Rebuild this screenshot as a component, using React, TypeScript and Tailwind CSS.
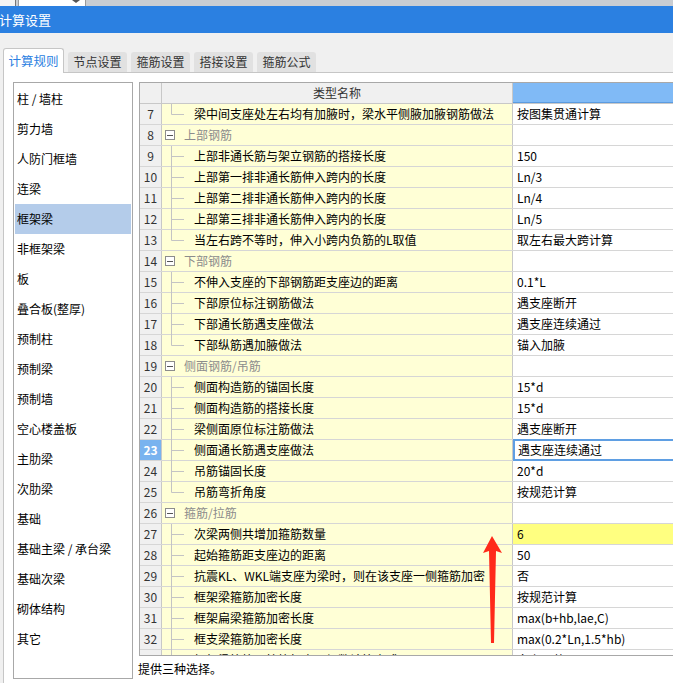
import React from "react";

type Row = { n: number; name: string; value?: string; group?: boolean; last?: boolean };

const rows: Row[] = [
  { n: 7, name: "梁中间支座处左右均有加腋时，梁水平侧腋加腋钢筋做法", value: "按图集贯通计算", last: true },
  { n: 8, name: "上部钢筋", group: true },
  { n: 9, name: "上部非通长筋与架立钢筋的搭接长度", value: "150" },
  { n: 10, name: "上部第一排非通长筋伸入跨内的长度", value: "Ln/3" },
  { n: 11, name: "上部第二排非通长筋伸入跨内的长度", value: "Ln/4" },
  { n: 12, name: "上部第三排非通长筋伸入跨内的长度", value: "Ln/5" },
  { n: 13, name: "当左右跨不等时，伸入小跨内负筋的L取值", value: "取左右最大跨计算", last: true },
  { n: 14, name: "下部钢筋", group: true },
  { n: 15, name: "不伸入支座的下部钢筋距支座边的距离", value: "0.1*L" },
  { n: 16, name: "下部原位标注钢筋做法", value: "遇支座断开" },
  { n: 17, name: "下部通长筋遇支座做法", value: "遇支座连续通过" },
  { n: 18, name: "下部纵筋遇加腋做法", value: "锚入加腋", last: true },
  { n: 19, name: "侧面钢筋/吊筋", group: true },
  { n: 20, name: "侧面构造筋的锚固长度", value: "15*d" },
  { n: 21, name: "侧面构造筋的搭接长度", value: "15*d" },
  { n: 22, name: "梁侧面原位标注筋做法", value: "遇支座断开" },
  { n: 23, name: "侧面通长筋遇支座做法", value: "遇支座连续通过" },
  { n: 24, name: "吊筋锚固长度", value: "20*d" },
  { n: 25, name: "吊筋弯折角度", value: "按规范计算", last: true },
  { n: 26, name: "箍筋/拉筋", group: true },
  { n: 27, name: "次梁两侧共增加箍筋数量", value: "6" },
  { n: 28, name: "起始箍筋距支座边的距离", value: "50" },
  { n: 29, name: "抗震KL、WKL端支座为梁时，则在该支座一侧箍筋加密", value: "否" },
  { n: 30, name: "框架梁箍筋加密长度", value: "按规范计算" },
  { n: 31, name: "框架扁梁箍筋加密长度", value: "max(b+hb,lae,C)" },
  { n: 32, name: "框支梁箍筋加密长度", value: "max(0.2*Ln,1.5*hb)" },
  { n: 33, name: "框架梁箍筋、拉筋加密区根数计算方式", value: "向上取整+1" },
];

const categories = [
  "柱 / 墙柱", "剪力墙", "人防门框墙", "连梁", "框架梁", "非框架梁", "板", "叠合板(整厚)",
  "预制柱", "预制梁", "预制墙", "空心楼盖板", "主肋梁", "次肋梁", "基础", "基础主梁 / 承台梁",
  "基础次梁", "砌体结构", "其它",
];

const tabs = ["计算规则", "节点设置", "箍筋设置", "搭接设置", "箍筋公式"];

function TreeLine({ last }: { last?: boolean }) {
  return (
    <svg width="24" height="21" className="shrink-0">
      <line x1="9.5" y1="0" x2="9.5" y2={last ? 10.5 : 21} stroke="#c4c4c4" strokeWidth="1" />
      <line x1="9.5" y1="10.5" x2="22" y2="10.5" stroke="#c4c4c4" strokeWidth="1" />
    </svg>
  );
}

function TableRow({ row }: { row: Row }) {
  const selected = row.n === 23;
  const highlight = row.n === 27;
  return (
    <div className="flex h-[21px] shrink-0 border-b border-[#d6d6d6]">
      <div
        className={
          selected
            ? "w-[22px] shrink-0 border-r border-[#c8c8c8] bg-[#79b3ef] text-white font-bold flex items-center justify-center"
            : "w-[22px] shrink-0 border-r border-[#c8c8c8] bg-[#f0f0f0] text-[#333] flex items-center justify-center"
        }
      >
        {row.n}
      </div>
      <div className="w-[351px] shrink-0 border-r border-[#c8c8c8] bg-[#ffffd6] flex items-center">
        {row.group ? (
          <>
            <span className="ml-[3px] w-[10px] h-[10px] border border-[#8c8c8c] bg-white flex items-center justify-center shrink-0">
              <span className="w-[6px] h-px bg-[#555]" />
            </span>
            <span className="ml-[9px] text-[#8c8c8c] whitespace-nowrap">{row.name}</span>
          </>
        ) : (
          <>
            <TreeLine last={row.last} />
            <span className="ml-[8px] text-black whitespace-nowrap">{row.name}</span>
          </>
        )}
      </div>
      <div
        className={
          selected
            ? "w-[220px] shrink-0 flex items-center pl-[3px] bg-white border-2 border-[#5f9fe3] -my-px"
            : highlight
            ? "w-[220px] shrink-0 flex items-center pl-[4px] bg-[#ffff80]"
            : "w-[220px] shrink-0 flex items-center pl-[4px] bg-white"
        }
      >
        <span className="whitespace-nowrap text-black">{row.value}</span>
      </div>
    </div>
  );
}

export default function App() {
  return (
    <div className="relative w-[673px] h-[683px] overflow-hidden bg-[#f0f0f0] font-['Microsoft_YaHei','Noto_Sans_CJK_SC',sans-serif] text-[12px] leading-none">
      {/* strip of the window above */}
      <div className="h-[6px] flex bg-[#c9cdd2] overflow-hidden">
        <div className="w-[16px] h-[6px] bg-[#f4f4f4] border-r border-[#777]" />
        <div className="ml-[2px] w-[68px] h-[6px] bg-white border-x border-[#9a9a9a] flex justify-end pr-[5px]">
          <span className="w-0 h-0 border-x-[4px] border-x-transparent border-t-[3px] border-t-[#555]" />
        </div>
      </div>

      {/* title bar */}
      <div className="h-[27px] bg-[#2b80e1] flex items-center">
        <span className="text-white text-[13px] -ml-[1px]">计算设置</span>
      </div>

      {/* tabs */}
      <div className="h-[39px] flex items-end pl-[3px] gap-[4px]">
        {tabs.map((t, i) =>
          i === 0 ? (
            <div
              key={t}
              className="w-[61px] h-[25px] -mb-px bg-white border border-b-0 border-[#c6c6c6] rounded-t-[3px] flex items-center justify-center text-[#2b80e1] text-[12.5px] z-10"
            >
              {t}
            </div>
          ) : (
            <div
              key={t}
              className="w-[59px] h-[20px] bg-[#e1e1e1] rounded-t-[3px] flex items-center justify-center text-[#333]"
            >
              {t}
            </div>
          )
        )}
      </div>

      {/* panel */}
      <div className="ml-[3px] h-[611px] bg-white border-l border-t border-[#c6c6c6] flex">
        {/* left category list */}
        <div className="ml-[9px] mt-[9px] w-[120px] h-[597px] shrink-0 border border-[#a8a8a8] p-px flex flex-col">
          {categories.map((c) => (
            <div
              key={c}
              className={
                c === "框架梁"
                  ? "h-[30px] shrink-0 flex items-center pl-[2px] bg-[#b4ccea] text-black"
                  : "h-[30px] shrink-0 flex items-center pl-[2px] text-black"
              }
            >
              {c}
            </div>
          ))}
        </div>

        {/* right side: table + description */}
        <div className="ml-[6px] mt-[9px] flex-1 flex flex-col min-w-0">
          <div className="h-[574px] border-l border-t border-b border-[#a8a8a8] flex flex-col overflow-hidden">
            <div className="flex h-[21px] shrink-0 border-b border-[#c8c8c8]">
              <div className="w-[22px] shrink-0 border-r border-[#c8c8c8] bg-[#f0f0f0]" />
              <div className="w-[351px] shrink-0 border-r border-[#c8c8c8] bg-[#f0f0f0] flex items-center justify-center text-[#333]">
                类型名称
              </div>
              <div className="w-[220px] shrink-0 bg-[#80baf6] border-b border-[#5b9be0]" />
            </div>
            {rows.map((r) => (
              <TableRow key={r.n} row={r} />
            ))}
          </div>
          <div className="mt-[7px] -ml-px text-black">提供三种选择。</div>
        </div>
      </div>

      {/* red annotation arrow */}
      <svg className="absolute left-0 top-0 pointer-events-none" width="673" height="683">
        <polygon
          points="492,536 483,553 489,551 491,643 494,643 496,551 502,553"
          fill="#ff2a1a"
        />
      </svg>
    </div>
  );
}
